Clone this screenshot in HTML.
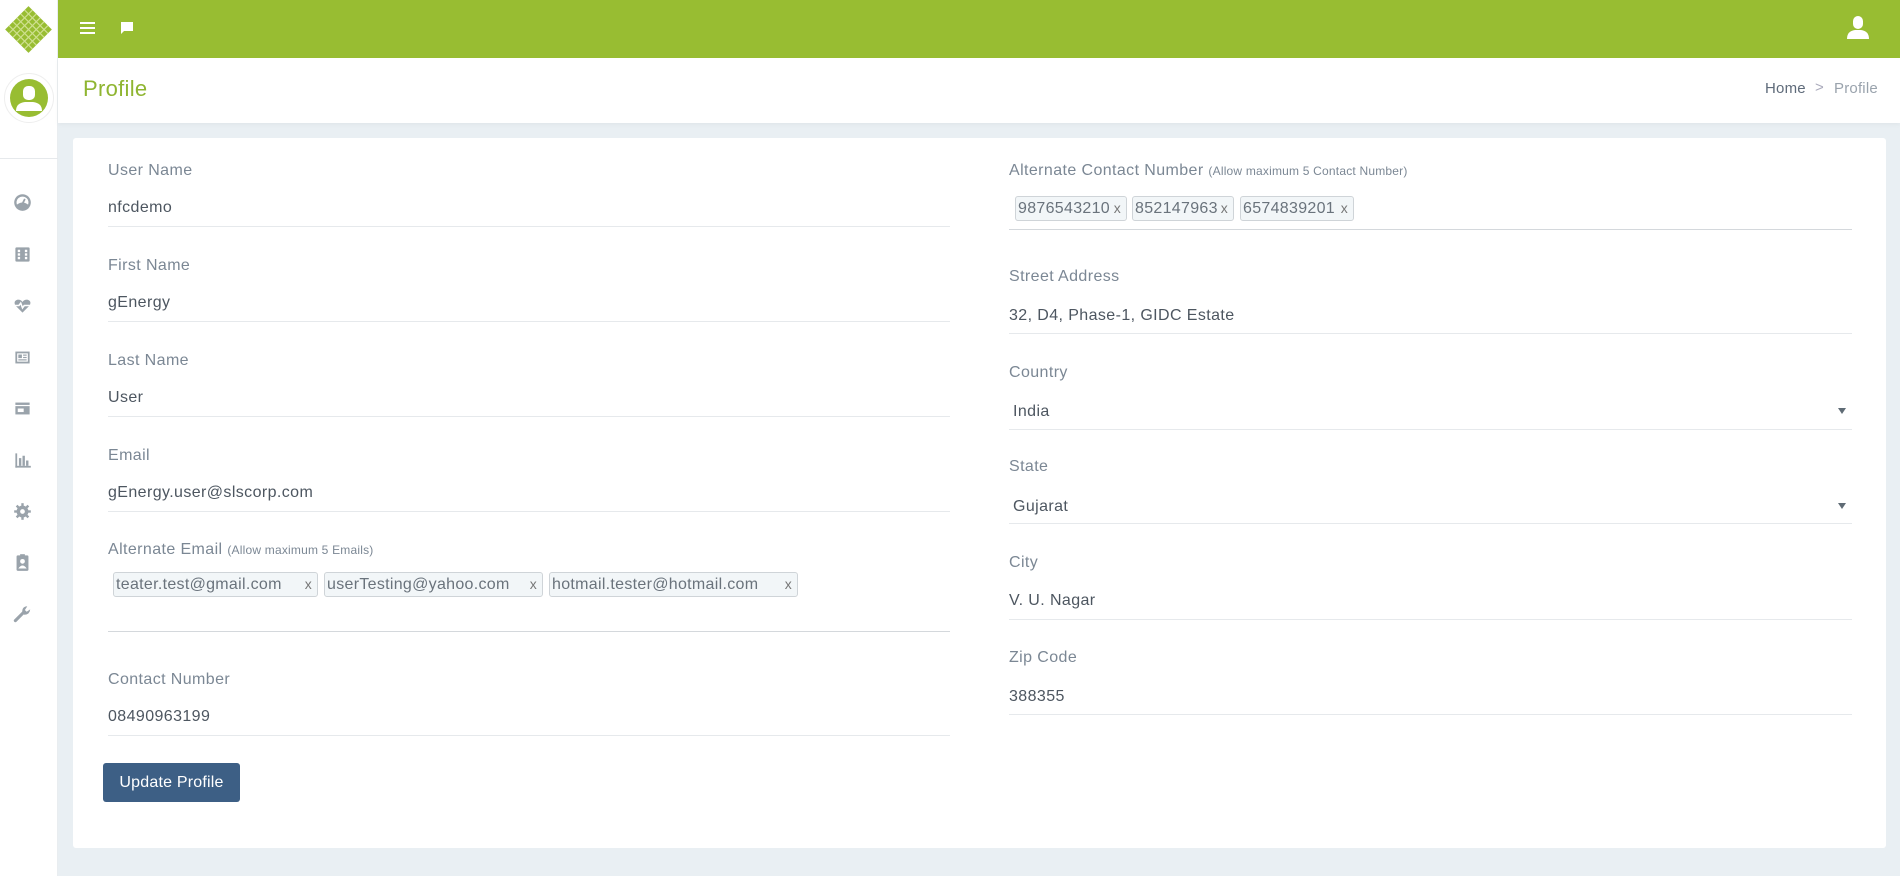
<!DOCTYPE html>
<html><head><meta charset="utf-8"><style>
*{margin:0;padding:0;box-sizing:border-box}
body{width:1900px;height:876px;overflow:hidden;background:#e9eff3;font-family:"Liberation Sans",sans-serif;position:relative}
.side{position:absolute;left:0;top:0;width:58px;height:876px;background:#fff;border-right:1px solid #e9edf0}
.top{position:absolute;left:58px;top:0;right:0;height:58px;background:#98bd32}
.hdr{position:absolute;left:58px;top:58px;right:0;height:65px;background:#fff;box-shadow:0 2px 4px rgba(0,0,0,.04)}
.card{position:absolute;left:73px;top:138px;width:1813px;height:710px;background:#fff;border-radius:3px}
.t{position:absolute;font-size:16px;line-height:20px;white-space:nowrap;letter-spacing:.4px}
.lb{color:#7b8794}
.vl{color:#4d5660}
.ln{position:absolute;height:1px;background:#e6e9ec}
.sm{font-size:12px;letter-spacing:.2px}
.tag{position:absolute;height:25px;border:1px solid #cfd4d8;border-radius:3px;background:#f2f6f8;color:#6a737c;font-size:16px;line-height:23px;padding-left:2px;white-space:nowrap;letter-spacing:.3px}
.tag span{position:absolute;right:5px;top:0;font-size:14px;color:#777}
.ic{position:absolute;left:13px;width:19px;height:19px}
.arr{position:absolute;width:0;height:0;border-left:4px solid transparent;border-right:4px solid transparent;border-top:6px solid #5f6b75}
</style></head><body>
<div class="side">
<svg style="position:absolute;left:5px;top:6px" width="47" height="47" viewBox="0 0 47 47"><g transform="rotate(45 23.5 23.5)"><rect x="7" y="7" width="33" height="33" fill="#98bd32"/><g stroke="#cfe08f" stroke-width="1.2"><line x1="12.5" y1="7" x2="12.5" y2="40"/><line x1="18" y1="7" x2="18" y2="40"/><line x1="23.5" y1="7" x2="23.5" y2="40"/><line x1="29" y1="7" x2="29" y2="40"/><line x1="34.5" y1="7" x2="34.5" y2="40"/><line y1="12.5" x1="7" y2="12.5" x2="40"/><line y1="18" x1="7" y2="18" x2="40"/><line y1="23.5" x1="7" y2="23.5" x2="40"/><line y1="29" x1="7" y2="29" x2="40"/><line y1="34.5" x1="7" y2="34.5" x2="40"/></g></g></svg>
<div style="position:absolute;left:4px;top:73px;width:50px;height:50px;border-radius:50%;border:1px solid #eee;background:#fff"></div>
<svg style="position:absolute;left:10px;top:79px" width="38" height="38" viewBox="0 0 38 38"><clipPath id="c"><circle cx="19" cy="19" r="19"/></clipPath><circle cx="19" cy="19" r="19" fill="#98bd32"/><g clip-path="url(#c)" fill="#fff"><rect x="13" y="7" width="12" height="14" rx="5"/><path d="M6 32 Q6 24 15 23 L23 23 Q32 24 32 32 Z"/></g></svg>
<div style="position:absolute;left:0;top:158px;width:58px;height:1px;background:#e6e9ec"></div>
<svg class="ic" style="top:193px" viewBox="0 0 16 16"><circle cx="8" cy="8" r="7" fill="#9aa3ab"/><circle cx="8" cy="8" r="5" fill="#fff"/><path d="M3 10 Q8 6 13 10 L13 13 L3 13Z" fill="#9aa3ab"/><line x1="8" y1="9" x2="10" y2="5" stroke="#9aa3ab" stroke-width="1.5"/></svg>
<svg class="ic" style="top:245px" viewBox="0 0 16 16"><rect x="2" y="2" width="12" height="12" rx="1" fill="#9aa3ab"/><g fill="#fff"><rect x="4" y="4" width="2" height="2"/><rect x="4" y="7" width="2" height="2"/><rect x="4" y="10" width="2" height="2"/><rect x="10" y="4" width="2" height="2"/><rect x="10" y="7" width="2" height="2"/><rect x="10" y="10" width="2" height="2"/></g></svg>
<svg class="ic" style="top:296px" viewBox="0 0 16 16"><path d="M8 14 L2 8 Q0 4 4 3 Q7 3 8 5 Q9 3 12 3 Q16 4 14 8Z" fill="#9aa3ab"/><path d="M1 8 H5 L6.5 6 L8 10 L9.5 8 H15" stroke="#fff" stroke-width="1.3" fill="none"/></svg>
<svg class="ic" style="top:348px" viewBox="0 0 16 16"><rect x="2" y="3" width="12" height="10" fill="#9aa3ab"/><rect x="3.5" y="4.5" width="9" height="7" fill="#fff"/><rect x="4.5" y="5.5" width="3" height="3" fill="#9aa3ab"/><rect x="8.5" y="5.5" width="3" height="1" fill="#9aa3ab"/><rect x="8.5" y="7.5" width="3" height="1" fill="#9aa3ab"/><rect x="4.5" y="9.5" width="7" height="1" fill="#9aa3ab"/></svg>
<svg class="ic" style="top:399px" viewBox="0 0 16 16"><rect x="2" y="3" width="12" height="2" fill="#9aa3ab"/><rect x="2" y="6" width="12" height="7" fill="#9aa3ab"/><rect x="4" y="8" width="5" height="3" fill="#fff"/></svg>
<svg class="ic" style="top:451px" viewBox="0 0 16 16"><g fill="#9aa3ab"><rect x="2" y="2" width="1.5" height="12"/><rect x="2" y="12.5" width="13" height="1.5"/><rect x="5" y="6" width="2" height="6.5"/><rect x="8" y="4" width="2" height="8.5"/><rect x="11" y="8" width="2" height="4.5"/></g></svg>
<svg class="ic" style="top:502px" viewBox="0 0 16 16"><g fill="#9aa3ab"><circle cx="8" cy="8" r="5"/><rect x="7" y="1" width="2" height="14"/><rect x="1" y="7" width="14" height="2"/><rect x="7" y="1" width="2" height="14" transform="rotate(45 8 8)"/><rect x="7" y="1" width="2" height="14" transform="rotate(-45 8 8)"/></g><circle cx="8" cy="8" r="2" fill="#fff"/></svg>
<svg class="ic" style="top:553px" viewBox="0 0 16 16"><rect x="3" y="2" width="10" height="13" rx="1" fill="#9aa3ab"/><rect x="6" y="1" width="4" height="2" fill="#9aa3ab"/><circle cx="8" cy="7" r="2" fill="#fff"/><path d="M4.5 13 Q8 8 11.5 13Z" fill="#fff"/></svg>
<svg class="ic" style="top:604px" viewBox="0 0 16 16"><path d="M2 14 L9 7" stroke="#9aa3ab" stroke-width="2.6" stroke-linecap="round"/><path d="M8 8 Q7 3 11 2 L12 2 L10 5 L11.5 6.5 L14.5 4.5 Q14 9 9.5 9Z" fill="#9aa3ab"/></svg>
</div>
<div class="top">
<svg style="position:absolute;left:22px;top:21px" width="16" height="14" viewBox="0 0 16 14"><g fill="#fff"><rect y="1" width="15" height="2"/><rect y="6" width="15" height="2"/><rect y="11" width="15" height="2"/></g></svg>
<svg style="position:absolute;left:62px;top:21px" width="14" height="14" viewBox="0 0 14 14"><path d="M1 1 H13 V10 H4 L1 13Z" fill="#fff"/></svg>
<svg style="position:absolute;left:1789px;top:16px" width="22" height="24" viewBox="0 0 22 24"><g fill="#fff"><rect x="6" y="0" width="10" height="13" rx="5"/><path d="M0 23 Q0 15 8 14 L14 14 Q22 15 22 23Z"/></g></svg>
</div>
<div class="hdr">
<div class="t" style="left:25px;top:17px;font-size:22px;line-height:28px;color:#8fb531;letter-spacing:.3px">Profile</div>
<div class="t" style="left:1707px;top:21px;font-size:15px;color:#5f6b7a;letter-spacing:.2px">Home</div>
<div class="t" style="left:1757px;top:20px;font-size:15px;color:#aab">&gt;</div>
<div class="t" style="left:1776px;top:21px;font-size:15px;color:#9aa3ad;letter-spacing:.2px">Profile</div>
</div>
<div class="t lb" style="left:108px;top:161px">User Name</div>
<div class="t vl" style="left:108px;top:198px">nfcdemo</div>
<div class="ln" style="left:108px;top:226px;width:842px"></div>
<div class="t lb" style="left:108px;top:256px">First Name</div>
<div class="t vl" style="left:108px;top:293px">gEnergy</div>
<div class="ln" style="left:108px;top:321px;width:842px"></div>
<div class="t lb" style="left:108px;top:351px">Last Name</div>
<div class="t vl" style="left:108px;top:388px">User</div>
<div class="ln" style="left:108px;top:416px;width:842px"></div>
<div class="t lb" style="left:108px;top:446px">Email</div>
<div class="t vl" style="left:108px;top:483px">gEnergy.user@slscorp.com</div>
<div class="ln" style="left:108px;top:511px;width:842px"></div>
<div class="t lb" style="left:108px;top:540px">Alternate Email <span class="sm">(Allow maximum 5 Emails)</span></div>
<div class="tag" style="left:113px;top:572px;width:205px">teater.test@gmail.com<span>x</span></div>
<div class="tag" style="left:324px;top:572px;width:219px">userTesting@yahoo.com<span>x</span></div>
<div class="tag" style="left:549px;top:572px;width:249px">hotmail.tester@hotmail.com<span>x</span></div>
<div class="ln" style="left:108px;top:631px;width:842px;background:#d4d8dc"></div>
<div class="t lb" style="left:108px;top:670px">Contact Number</div>
<div class="t vl" style="left:108px;top:707px">08490963199</div>
<div class="ln" style="left:108px;top:735px;width:842px"></div>
<div style="position:absolute;left:103px;top:763px;width:137px;height:39px;background:#3d5f85;border-radius:3px;color:#fff;font-size:16px;line-height:39px;text-align:center;letter-spacing:.2px">Update Profile</div>

<div class="t lb" style="left:1009px;top:161px">Alternate Contact Number <span class="sm">(Allow maximum 5 Contact Number)</span></div>
<div class="tag" style="left:1015px;top:196px;width:112px">9876543210<span>x</span></div>
<div class="tag" style="left:1132px;top:196px;width:102px">852147963<span>x</span></div>
<div class="tag" style="left:1240px;top:196px;width:114px">6574839201<span>x</span></div>
<div class="ln" style="left:1009px;top:229px;width:843px;background:#d4d8dc"></div>
<div class="t lb" style="left:1009px;top:267px">Street Address</div>
<div class="t vl" style="left:1009px;top:306px">32, D4, Phase-1, GIDC Estate</div>
<div class="ln" style="left:1009px;top:333px;width:843px"></div>
<div class="t lb" style="left:1009px;top:363px">Country</div>
<div class="t vl" style="left:1013px;top:402px">India</div>
<div class="arr" style="left:1838px;top:408px"></div>
<div class="ln" style="left:1009px;top:429px;width:843px"></div>
<div class="t lb" style="left:1009px;top:457px">State</div>
<div class="t vl" style="left:1013px;top:497px">Gujarat</div>
<div class="arr" style="left:1838px;top:503px"></div>
<div class="ln" style="left:1009px;top:523px;width:843px"></div>
<div class="t lb" style="left:1009px;top:553px">City</div>
<div class="t vl" style="left:1009px;top:591px">V. U. Nagar</div>
<div class="ln" style="left:1009px;top:619px;width:843px"></div>
<div class="t lb" style="left:1009px;top:648px">Zip Code</div>
<div class="t vl" style="left:1009px;top:687px">388355</div>
<div class="ln" style="left:1009px;top:714px;width:843px"></div>
<div class="card" style="z-index:-1"></div>
</body></html>
